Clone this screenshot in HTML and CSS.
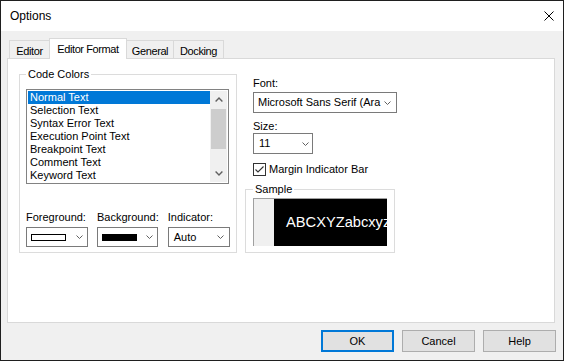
FILE: index.html
```html
<!DOCTYPE html>
<html lang="en">
<head>
  <meta charset="UTF-8" />
  <title>Options</title>
  <link rel="stylesheet" href="styles.css">
</head>
<body>

  <div class="window">
    <!-- Title bar -->
    <div class="titlebar">
      <span class="title">Options</span>
      <svg class="close" width="10" height="10" viewBox="0 0 10 10">
        <path d="M0.5 0.5L9.5 9.5M9.5 0.5L0.5 9.5" stroke="#000" stroke-width="1" fill="none"/>
      </svg>
    </div>

    <div class="client">
      <!-- Tabs -->
      <div class="tabs">
        <div class="tab tab-editor">Editor</div>
        <div class="tab tab-format active">Editor Format</div>
        <div class="tab tab-general">General</div>
        <div class="tab tab-docking">Docking</div>
      </div>

      <div class="panel">
        <!-- Code Colors -->
        <fieldset class="group code-colors">
          <legend>Code Colors</legend>
          <div class="listbox">
            <ul class="items">
              <li class="selected">Normal Text</li>
              <li>Selection Text</li>
              <li>Syntax Error Text</li>
              <li>Execution Point Text</li>
              <li>Breakpoint Text</li>
              <li>Comment Text</li>
              <li>Keyword Text</li>
            </ul>
            <div class="scrollbar">
              <div class="sb-btn">
                <svg width="8" height="5" viewBox="0 0 8 5"><path d="M0.6 4.4L4 1L7.4 4.4" fill="none" stroke="#606060" stroke-width="1.4"/></svg>
              </div>
              <div class="sb-thumb"></div>
              <div class="sb-track"></div>
              <div class="sb-btn">
                <svg width="8" height="5" viewBox="0 0 8 5"><path d="M0.6 0.6L4 4L7.4 0.6" fill="none" stroke="#606060" stroke-width="1.4"/></svg>
              </div>
            </div>
          </div>

          <div class="color-row">
            <div class="color-field">
              <label class="field-label">Foreground:</label>
              <div class="combo combo-fg">
                <span class="swatch swatch-white"></span>
                <svg class="chev" width="7" height="4" viewBox="0 0 7 4"><path d="M0.5 0.5L3.5 3.5L6.5 0.5" fill="none" stroke="#606060"/></svg>
              </div>
            </div>
            <div class="color-field">
              <label class="field-label">Background:</label>
              <div class="combo combo-bg">
                <span class="swatch swatch-black"></span>
                <svg class="chev" width="7" height="4" viewBox="0 0 7 4"><path d="M0.5 0.5L3.5 3.5L6.5 0.5" fill="none" stroke="#606060"/></svg>
              </div>
            </div>
            <div class="color-field">
              <label class="field-label">Indicator:</label>
              <div class="combo combo-ind">
                <span class="combo-text">Auto</span>
                <svg class="chev" width="7" height="4" viewBox="0 0 7 4"><path d="M0.5 0.5L3.5 3.5L6.5 0.5" fill="none" stroke="#606060"/></svg>
              </div>
            </div>
          </div>
        </fieldset>

        <!-- Font / size / sample -->
        <div class="side">
          <label class="field-label font-label">Font:</label>
          <div class="combo combo-font">
            <span class="combo-text">Microsoft Sans Serif (Ara</span>
            <svg class="chev" width="7" height="4" viewBox="0 0 7 4"><path d="M0.5 0.5L3.5 3.5L6.5 0.5" fill="none" stroke="#606060"/></svg>
          </div>

          <label class="field-label size-label">Size:</label>
          <div class="combo combo-size">
            <span class="combo-text">11</span>
            <svg class="chev" width="7" height="4" viewBox="0 0 7 4"><path d="M0.5 0.5L3.5 3.5L6.5 0.5" fill="none" stroke="#606060"/></svg>
          </div>

          <div class="check-row">
            <svg class="checkbox" width="13" height="13" viewBox="0 0 13 13">
              <rect x="0.5" y="0.5" width="12" height="12" fill="#fff" stroke="#333"/>
              <path d="M2.5 6.5L5 9L10.5 3.5" fill="none" stroke="#333" stroke-width="1.1"/>
            </svg>
            <span>Margin Indicator Bar</span>
          </div>

          <fieldset class="group sample">
            <legend>Sample</legend>
            <div class="sample-box">
              <div class="gutter"></div>
              <div class="sample-text">ABCXYZabcxyz</div>
            </div>
          </fieldset>
        </div>
      </div>

      <!-- Dialog buttons -->
      <div class="buttons">
        <button class="btn default">OK</button>
        <button class="btn">Cancel</button>
        <button class="btn">Help</button>
      </div>
    </div>
  </div>

</body>
</html>
```

FILE: styles.css
```css
body {
  margin: 0;
  font-family: "Liberation Sans", Arial, sans-serif;
  font-size: 11px;
  line-height: 13px;
  color: #000;
  background: #fff;
}
.window {
  width: 564px;
  height: 361px;
  box-sizing: border-box;
  border: 1px solid #1f1f1f;
  display: flex;
  flex-direction: column;
  background: #f0f0f0;
}
.titlebar {
  height: 30px;
  flex: none;
  background: #fff;
  display: flex;
  align-items: center;
  justify-content: space-between;
  padding: 0 9px 0 9px;
}
.title {
  font-size: 12px;
}
.client {
  flex: 1;
  display: flex;
  flex-direction: column;
  padding: 7px 7px 8px 6px;
}
/* Tabs */
.tabs {
  display: flex;
  align-items: flex-end;
  height: 20px;
  margin-left: 2px;
}
.tab {
  box-sizing: border-box;
  height: 18px;
  border: 1px solid #d9d9d9;
  border-bottom: none;
  background: #f0f0f0;
  text-align: center;
  padding-top: 4px;
  letter-spacing: -0.4px;
  margin-left: -1px;
}
.tab-editor { width: 41px; margin-left: 0; }
.tab-format { width: 78px; }
.tab-general { width: 48px; }
.tab-docking { width: 51px; }
.tab.active {
  height: 21px;
  margin-bottom: -1px;
  background: #fff;
  position: relative;
  z-index: 1;
  padding-top: 4px;
}
.panel {
  width: 548px;
  height: 265px;
  box-sizing: border-box;
  border: 1px solid #d9d9d9;
  background: #fff;
  display: flex;
  align-items: flex-start;
  gap: 8px;
  padding: 9px 0 0 11px;
}
/* Groups */
.group {
  margin: 0;
  min-width: 0;
  box-sizing: border-box;
  border: 1px solid #dcdcdc;
}
.group legend {
  padding: 0 2px;
  line-height: 13px;
}
.code-colors {
  width: 218px;
  padding: 8px 7px 5px 6px;
}
.listbox {
  display: flex;
  height: 95px;
  box-sizing: border-box;
  border: 1px solid #828282;
  padding: 1px;
}
.items {
  list-style: none;
  margin: 0;
  padding: 0;
  flex: 1;
}
.items li {
  height: 13px;
  padding-left: 2px;
  white-space: nowrap;
}
.items li.selected {
  background: #0078d7;
  color: #fff;
}
.scrollbar {
  width: 17px;
  background: #f0f0f0;
  display: flex;
  flex-direction: column;
}
.sb-btn {
  height: 17px;
  display: flex;
  align-items: center;
  justify-content: center;
}
.sb-thumb {
  height: 40px;
  margin: 1px 1px 0 1px;
  background: #cdcdcd;
}
.sb-track {
  flex: 1;
}
.color-row {
  display: flex;
  gap: 9px;
  margin-top: 27px;
}
.field-label {
  display: block;
  white-space: nowrap;
}
.color-field .field-label {
  margin-bottom: 3px;
}
/* Combo boxes */
.combo {
  display: flex;
  align-items: center;
  justify-content: space-between;
  box-sizing: border-box;
  height: 20px;
  border: 1px solid #7a7a7a;
  background: #fff;
  padding: 0 4px;
}
.combo-fg { width: 62px; }
.combo-bg { width: 61px; }
.combo-ind { width: 62px; padding: 0 5px 0 5px; }
.swatch {
  width: 35px;
  height: 7px;
  box-sizing: border-box;
  border: 1px solid #000;
}
.swatch-white { background: #fff; }
.swatch-black { background: #000; }
.combo-text {
  white-space: nowrap;
}
.chev {
  flex: none;
}
/* Right side */
.side {
  width: 150px;
  display: flex;
  flex-direction: column;
}
.side .field-label,
.side .combo,
.check-row {
  margin-left: 8px;
}
.font-label {
  margin-top: 9px;
  margin-bottom: 2px;
}
.combo-font {
  width: 144px;
  height: 21px;
  padding: 0 5px 0 4px;
}
.size-label {
  margin-top: 7px;
  margin-bottom: 0;
}
.combo-size {
  width: 60px;
  height: 21px;
  padding: 0 3px 0 5px;
}
.check-row {
  display: flex;
  align-items: center;
  gap: 3px;
  margin-top: 9px;
  height: 13px;
}
.sample {
  width: 150px;
  margin-top: 7px;
  padding: 2px 7px 6px 7px;
}
.sample-box {
  display: flex;
  width: 134px;
  height: 48px;
  box-sizing: border-box;
  border-left: 1px solid #a0a0a0;
  border-top: 1px solid #a0a0a0;
  overflow: hidden;
}
.gutter {
  width: 20px;
  flex: none;
  background: #f0f0f0;
}
.sample-text {
  flex: 1;
  background: #000;
  color: #fff;
  font-size: 11pt;
  line-height: 17px;
  padding-left: 12px;
  white-space: nowrap;
  overflow: hidden;
  display: flex;
  align-items: center;
}
/* Buttons */
.buttons {
  display: flex;
  justify-content: flex-end;
  gap: 8px;
  margin-top: 7px;
}
.btn {
  width: 73px;
  height: 22px;
  box-sizing: border-box;
  border: 1px solid #adadad;
  background: #e1e1e1;
  font-family: "Liberation Sans", Arial, sans-serif;
  font-size: 11px;
  color: #000;
  padding: 0;
}
.btn.default {
  border: 2px solid #0078d7;
}
```
